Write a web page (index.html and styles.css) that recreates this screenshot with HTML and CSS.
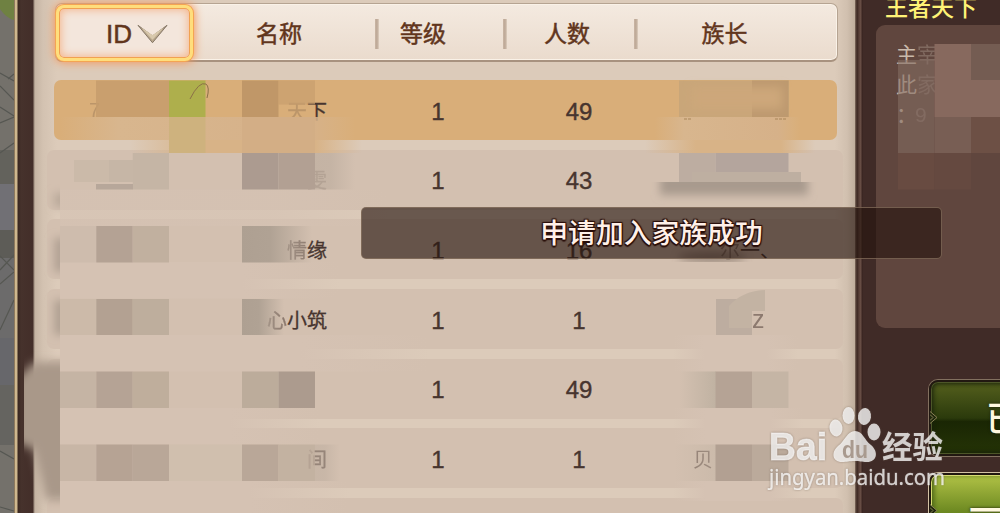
FILE: index.html
```html
<!DOCTYPE html>
<html lang="zh-CN">
  <head>
    <meta charset="UTF-8" />
    <meta name="viewport" content="width=device-width, initial-scale=1.0" />
    <title>家族列表</title>
    <link rel="stylesheet" href="styles.css">
  </head>
  <body>
    <div class="screen">
      <!-- Scene behind the window -->
      <svg class="scene" viewBox="0 0 14 513">
        <rect width="14" height="513" fill="#74716b" />
        <path d="M0 0H14V20Q6 18 0 9Z" fill="#6f8142" />
        <rect y="150" width="14" height="34" fill="#63625c" />
        <rect y="184" width="14" height="46" fill="#717075" />
        <rect y="230" width="14" height="28" fill="#5d5c57" />
        <rect y="258" width="14" height="80" fill="#6c6b6b" />
        <rect y="338" width="14" height="62" fill="#67676b" />
        <rect y="385" width="14" height="60" fill="#656460" />
        <path d="M0 73L14 81M0 86L14 100M0 107L14 116M14 74L8 79M0 123L14 117M0 153L14 143M0 270L14 255M0 256L14 270M0 284L14 272M0 330L14 300M0 451L14 459M0 507L14 511" fill="none" stroke="#565752" stroke-width="1.2" />
      </svg>
      <div class="frame"></div>

      <main class="panel">
        <header class="table-head">
          <div class="head-id">
            <span>ID</span>
            <svg class="sort-arrow" viewBox="0 0 32 20">
              <path d="M1 1L16 19L31 1L16 12Z" fill="#b9a78c" stroke="#837565" stroke-width="1" />
              <path d="M4 3L16 11L28 3L16 16Z" fill="#d8c8ac" />
            </svg>
          </div>
          <div class="head-name">名称</div>
          <div class="sep">等级</div>
          <div class="sep sep-count">人数</div>
          <div class="sep sep-chief">族长</div>
        </header>

        <div class="rows">
          <div class="row selected">
            <span class="id"><i class="faint">7</i></span>
            <span class="name"><i class="faint">天</i>下</span>
            <span class="num">1</span>
            <span class="num">49</span>
            <span class="chief"></span>
          </div>
          <div class="row">
            <span class="id"></span>
            <span class="name"><i class="faint">雯</i></span>
            <span class="num">1</span>
            <span class="num">43</span>
            <span class="chief"></span>
          </div>
          <div class="row">
            <span class="id"></span>
            <span class="name"><i class="half">情</i>缘</span>
            <span class="num">1</span>
            <span class="num">16</span>
            <span class="chief chief-mark"><i class="half">尔</i>一、</span>
          </div>
          <div class="row">
            <span class="id"></span>
            <span class="name"><i class="half">心</i>小筑</span>
            <span class="num">1</span>
            <span class="num">1</span>
            <span class="chief chief-z"><i class="half">z</i></span>
          </div>
          <div class="row">
            <span class="id"></span>
            <span class="name"></span>
            <span class="num">1</span>
            <span class="num">49</span>
            <span class="chief"></span>
          </div>
          <div class="row">
            <span class="id"></span>
            <span class="name"><i class="half">间</i></span>
            <span class="num">1</span>
            <span class="num">1</span>
            <span class="chief chief-last"><i class="half">贝</i></span>
          </div>
          <div class="row"></div>
        </div>
      </main>

      <div class="divider"></div>

      <aside class="side">
        <h2>王者天下</h2>
        <div class="notice">
          <p>主<i>宰</i></p>
          <p>此<i>家</i></p>
          <p class="colon">：<i>9</i></p>
        </div>
        <div class="btn btn-dark">
          <svg class="btn-notch" viewBox="0 0 8 12"><path d="M0 0L7 6L0 12M0 3L3 6L0 9" /></svg>
          <span>已申请</span>
        </div>
        <div class="btn btn-bright">
          <svg class="btn-notch" viewBox="0 0 8 12"><path d="M0 0L7 6L0 12M0 3L3 6L0 9" /></svg>
          <span>一键申请</span>
        </div>
      </aside>

      <!-- Privacy mosaic -->
      <svg class="mosaic" viewBox="0 0 1000 513">
        <defs>
          <filter id="soft" x="-30%" y="-60%" width="160%" height="220%"><feGaussianBlur stdDeviation="5" /></filter>
          <filter id="soft2" x="-80%" y="-60%" width="260%" height="220%"><feGaussianBlur stdDeviation="4" /></filter>
          <linearGradient id="fadeR"><stop offset=".65" stop-color="#d5c2b3" /><stop offset="1" stop-color="#d5c2b3" stop-opacity="0" /></linearGradient>
          <linearGradient id="fadeB"><stop offset="0" stop-color="#d5c2b3" stop-opacity="0" /><stop offset=".25" stop-color="#d5c2b3" /><stop offset=".75" stop-color="#d5c2b3" /><stop offset="1" stop-color="#d5c2b3" stop-opacity="0" /></linearGradient>
          <linearGradient id="tan"><stop offset="0" stop-color="#d8b68e" stop-opacity="0" /><stop offset=".2" stop-color="#d8b68e" /><stop offset=".85" stop-color="#d6b189" /><stop offset="1" stop-color="#d8b58a" stop-opacity="0" /></linearGradient>
          <linearGradient id="tanLow"><stop offset="0" stop-color="#d8b387" stop-opacity="0" /><stop offset=".3" stop-color="#d8b387" /><stop offset=".8" stop-color="#d8b387" /><stop offset="1" stop-color="#d8b387" stop-opacity="0" /></linearGradient>
          <linearGradient id="gray"><stop offset="0" stop-color="#aea092" /><stop offset=".4" stop-color="#b0a294" /><stop offset="1" stop-color="#b0a294" stop-opacity="0" /></linearGradient>
          <linearGradient id="grayL"><stop offset="0" stop-color="#c0b2a2" stop-opacity="0" /><stop offset="1" stop-color="#c0b2a2" /></linearGradient>
          <clipPath id="left"><rect x="24" y="150" width="36" height="363" /></clipPath>
          <clipPath id="smear"><rect x="640" y="182" width="190" height="25" /></clipPath>
          <clipPath id="chief3"><rect x="660" y="235" width="130" height="27" /></clipPath>
        </defs>

        <!-- selected row -->
        <rect x="96" y="80.5" width="73" height="36.5" fill="#c69c6c" opacity=".85" />
        <rect x="169" y="80.5" width="36.5" height="36.5" fill="#aeaf4c" />
        <path d="M190 99Q199 81 206 84Q210 87 207 98" fill="none" stroke="#8c7048" stroke-width="1" />
        <rect x="242" y="80.5" width="36.5" height="36.5" fill="#c09768" />
        <rect x="278.5" y="80.5" width="36.5" height="24" fill="#c89e6d" opacity=".7" />
        <rect x="60" y="117" width="295" height="23" fill="url(#tan)" />
        <rect x="130" y="140" width="232" height="13" fill="url(#tanLow)" />
        <rect x="645" y="140" width="170" height="13" fill="url(#tanLow)" />
        <rect x="169" y="117" width="36.5" height="36" fill="#ceb27e" />
        <rect x="242" y="117" width="73" height="36" fill="#d2ad85" opacity=".7" />
        <rect x="679" y="80.5" width="110" height="36.5" fill="#c9a679" />
        <rect x="752" y="80.5" width="36.5" height="36.5" fill="#bd996f" />
        <rect x="692" y="87" width="90" height="22" fill="#cda77a" filter="url(#soft)" />
        <rect x="655" y="117" width="145" height="23" fill="url(#tan)" />
        <path d="M684 119H692M775 119H787" stroke="#a88558" stroke-dasharray="3 1" />

        <!-- clean area -->
        <rect x="60" y="189.7" width="330" height="36.5" fill="url(#fadeR)" opacity=".65" />
        <rect x="60" y="262" width="280" height="36.5" fill="url(#fadeR)" />
        <rect x="60" y="335" width="370" height="36.5" fill="url(#fadeR)" />
        <rect x="60" y="408" width="260" height="36.5" fill="url(#fadeR)" />
        <rect x="60" y="481" width="290" height="32" fill="url(#fadeR)" />
        <rect x="673" y="335" width="125" height="36.5" fill="url(#fadeB)" />
        <rect x="673" y="408" width="130" height="36.5" fill="url(#fadeB)" />
        <rect x="673" y="481" width="130" height="20" fill="url(#fadeB)" />
        <g clip-path="url(#left)">
          <rect x="54" y="193" width="18" height="14" fill="#b9a99a" filter="url(#soft2)" />
          <rect x="54" y="238" width="18" height="34" fill="#b2a294" filter="url(#soft2)" />
          <rect x="54" y="300" width="18" height="35" fill="#b1a193" filter="url(#soft2)" />
          <path d="M16 380L34 362H76V500H46L34 450L16 442Z" fill="#a99889" filter="url(#soft)" />
        </g>

        <!-- id column -->
        <rect x="74" y="160" width="58" height="22" fill="#cbbaa9" />
        <rect x="109" y="160" width="60" height="22" fill="#c6b6a6" />
        <rect x="132.7" y="153" width="36.3" height="36.5" fill="#c5b5a5" />
        <rect x="96" y="184" width="37" height="5.5" fill="#b7a79a" />
        <rect x="60" y="226" width="36.3" height="36.5" fill="#cebcad" />
        <rect x="96.3" y="226" width="36.4" height="36.5" fill="#b4a294" />
        <rect x="132.7" y="226" width="36.3" height="36.5" fill="#c1b09f" />
        <rect x="60" y="299" width="36.3" height="36" fill="#ccbaa9" />
        <rect x="96.3" y="299" width="36.4" height="36" fill="#b3a192" />
        <rect x="132.7" y="299" width="36.3" height="36" fill="#beae9d" />
        <rect x="60" y="371.5" width="36.3" height="36.5" fill="#c5b4a4" />
        <rect x="96.3" y="371.5" width="36.4" height="36.5" fill="#b5a395" />
        <rect x="132.7" y="371.5" width="36.3" height="36.5" fill="#bfae9c" />
        <rect x="60" y="444.5" width="36.3" height="36.5" fill="#c8b6a6" />
        <rect x="96.3" y="444.5" width="36.4" height="36.5" fill="#b6a394" />
        <rect x="132.7" y="444.5" width="36.3" height="36.5" fill="#b9a798" />
        <rect x="169" y="444.5" width="73" height="36.5" fill="#d0bfae" />

        <!-- name column -->
        <rect x="242" y="153" width="36.5" height="36.5" fill="#ac9b90" />
        <rect x="278.5" y="153" width="36.5" height="36.5" fill="#b2a093" />
        <rect x="315" y="153" width="40" height="36.5" fill="url(#gray)" opacity=".4" />
        <rect x="242" y="226" width="70" height="36.5" fill="url(#gray)" />
        <rect x="242" y="299" width="42" height="36" fill="url(#gray)" />
        <rect x="242" y="371.5" width="36.5" height="36.5" fill="#bcac9b" />
        <rect x="278.5" y="371.5" width="36.5" height="36.5" fill="#ac9b8e" />
        <rect x="242" y="444.5" width="36.5" height="36.5" fill="#b9a798" />
        <rect x="278.5" y="444.5" width="36.5" height="36.5" fill="#bfae9d" opacity=".8" />
        <rect x="315" y="444.5" width="25" height="36.5" fill="url(#gray)" opacity=".3" />

        <!-- chief column -->
        <rect x="679" y="153" width="36.5" height="29" fill="#bdada1" />
        <rect x="715.5" y="153" width="73" height="21" fill="#b4a59d" />
        <rect x="692" y="172" width="109" height="12" fill="#beafa1" />
        <g clip-path="url(#smear)">
          <rect x="660" y="174" width="148" height="21" fill="#a89a8d" filter="url(#soft2)" />
        </g>
        <g clip-path="url(#chief3)">
          <ellipse cx="712" cy="257" rx="34" ry="5" fill="#6a5b51" opacity=".6" filter="url(#soft2)" />
        </g>
        <rect x="716" y="299" width="36" height="36" fill="#bdada0" />
        <path d="M729 306Q742 291 765 290V311H752V328H729Z" fill="#c3b3a3" />
        <rect x="680" y="371.5" width="36" height="36.5" fill="url(#grayL)" />
        <rect x="715.5" y="371.5" width="36.5" height="36.5" fill="#b5a395" />
        <rect x="752" y="371.5" width="36.5" height="36.5" fill="#c5b5a5" />
        <rect x="675" y="444.5" width="41" height="36.5" fill="url(#grayL)" opacity=".4" />
        <rect x="715.5" y="444.5" width="36.5" height="36.5" fill="#b2a092" />
        <rect x="752" y="444.5" width="36.5" height="36.5" fill="#bbaa9b" />

        <!-- sidebar -->
        <rect x="898" y="60" width="36.5" height="93" fill="#846c62" opacity=".6" />
        <rect x="934.5" y="44" width="36.5" height="36" fill="#87695e" />
        <rect x="971" y="44" width="29" height="36" fill="#745c52" />
        <rect x="934.5" y="80" width="65.5" height="37" fill="#87695e" />
        <rect x="934.5" y="117" width="36.5" height="36" fill="#785e54" />
        <rect x="971" y="117" width="29" height="36" fill="#6d5045" />
        <rect x="898" y="153" width="36.5" height="36.5" fill="#684b41" />
        <rect x="934.5" y="153" width="36.5" height="36.5" fill="#654940" />
      </svg>

      <div class="toast">申请加入家族成功</div>

      <svg class="watermark" viewBox="0 0 190 90">
        <text class="wm-logo" x="8" y="60" textLength="58" lengthAdjust="spacingAndGlyphs">Bai</text>
        <g class="wm-paw">
          <ellipse cx="75" cy="28" rx="6.5" ry="8.5" transform="rotate(-8 75 28)" />
          <ellipse cx="87.5" cy="15.5" rx="6" ry="8.5" />
          <ellipse cx="103.5" cy="16.5" rx="6.5" ry="8.5" transform="rotate(8 103.5 16.5)" />
          <ellipse cx="113" cy="32" rx="6.5" ry="8.5" />
          <path d="M94 31C102 31 103 40 110 45C118 52 116 62 106 62C100 62 99 61 94 61C88 61 86 62 81 62C71 62 70 52 77 46C84 41 86 31 94 31Z" />
        </g>
        <text class="wm-du" x="81" y="58" textLength="26" lengthAdjust="spacingAndGlyphs">du</text>
        <text class="wm-cn" x="121" y="58">经验</text>
        <text class="wm-url" x="8" y="85" textLength="176" lengthAdjust="spacingAndGlyphs">jingyan.baidu.com</text>
      </svg>
    </div>
  </body>
</html>
```

FILE: styles.css
```css
* {
  box-sizing: border-box;
}

body {
  margin: 0;
  font-family: 'Liberation Sans', 'Noto Sans CJK SC', sans-serif;
  background: #402b27;
  overflow: hidden;
}

i {
  font-style: normal;
}

.screen {
  position: relative;
  display: flex;
  width: 1000px;
  height: 513px;
  overflow: hidden;
}

.scene {
  width: 14px;
  height: 513px;
}

.frame {
  width: 21px;
  background: linear-gradient(90deg, #4b3a2c 0, #d0b98f 1px, #cdb68d 3px, #392720 4px, #46322c 7px, #432e29 19px, #a29182 20px, #b8a898 21px);
}

/* Main list */
.panel {
  width: 820px;
  padding: 3px 12px 0;
  background: linear-gradient(90deg, #c5b4a3 0, #d3c2b1 8px, #dccbba 22px, #dccbba 800px, #d1c0af 812px, #bfae9c 820px);
}

.table-head {
  display: grid;
  grid-template-columns: 137px 182px 128px 131px 203px;
  width: 783px;
  height: 59px;
  margin-left: 8px;
  border: 1px solid #b6a492;
  border-bottom: 2px solid #a8927f;
  border-radius: 7px;
  background: linear-gradient(#f4eae0, #eadbcd);
  box-shadow: inset 0 0 0 1px #faf2e8;
  color: #61351c;
  font-size: 23px;
  -webkit-text-stroke: 0.5px #61351c;
}

.table-head > div {
  display: flex;
  align-items: center;
  justify-content: center;
  padding-bottom: 1px;
}

.table-head .head-id {
  gap: 5px;
  height: 56px;
  margin-top: 1px;
  padding: 2px 0 0 25px;
  border: 3px solid #ffde7c;
  border-radius: 8px;
  background: #f3e6dc;
  box-shadow: 0 0 0 1px #f4a452, 0 0 8px 2px #f39b62, inset 0 0 0 1px #f1a151, inset 0 0 9px 2px #f5b68d;
  font-size: 26px;
}

.table-head > .head-name {
  padding-right: 10px;
}

.sort-arrow {
  width: 31px;
  height: 20px;
}

.table-head > .sep {
  padding-right: 32px;
  background: linear-gradient(90deg, #cab6a5, #bca795, #decfc0) 0 15px / 4px 30px no-repeat;
}

.table-head > .sep-count {
  padding-right: 3px;
}

.table-head > .sep-chief {
  padding-right: 22px;
}

.rows {
  display: grid;
  grid-auto-rows: 60px;
  row-gap: 9.7px;
  margin-top: 18px;
}

.row {
  display: grid;
  grid-template-columns: 120px 160px 220px 64px 232px;
  align-items: center;
  width: 796px;
  border-radius: 7px;
  background: #d3c0b0;
  color: #47352f;
  font-size: 20px;
}

.row.selected {
  width: 783px;
  margin-left: 7px;
  grid-template-columns: 113px 160px 220px 64px 226px;
  background: #d9ae79;
}

.id {
  padding-left: 35px;
}

.name {
  text-align: right;
  -webkit-text-stroke: 0.3px;
}

.num {
  padding-left: 10px;
  padding-top: 3px;
  font-size: 24px;
  text-align: center;
  -webkit-text-stroke: 0.4px;
}

.row .num:nth-child(3) {
  padding-left: 2px;
}

.row .num:nth-child(4) {
  padding-left: 0;
}

.faint {
  opacity: 0.2;
}

.half {
  opacity: 0.5;
}

.chief-mark {
  padding-left: 109px;
}

.chief-z {
  padding-left: 141px;
  font-size: 25px;
}

.chief-last {
  padding-left: 82px;
}

.divider {
  width: 8px;
  background: linear-gradient(90deg, #826e60, #3b2721 2px, #573f37 4px, #6c5148 6px, #36221e 7px, #402b27);
}

/* Right column */
.side {
  display: flex;
  flex-direction: column;
  flex: 1;
  min-width: 0;
  background: #402b27;
}

.side h2 {
  flex: none;
  height: 25px;
  margin: 0 0 0 22px;
  color: #fff376;
  font-size: 23px;
  font-weight: 500;
  line-height: 16px;
  white-space: nowrap;
}

.notice {
  flex: none;
  width: 140px;
  height: 303px;
  margin-left: 13px;
  padding: 16px 0 0 20px;
  border-radius: 9px;
  background: #60463e;
  color: #c9b9ab;
  font-size: 21px;
}

.notice p {
  height: 30px;
  margin: 0;
  line-height: 28px;
  white-space: nowrap;
}

.notice i {
  opacity: 0.3;
}

.notice .colon {
  letter-spacing: -2px;
}

.btn {
  position: relative;
  display: flex;
  flex: none;
  align-items: center;
  width: 160px;
  height: 76px;
  margin: 52px 0 0 66px;
  padding: 0 0 4px 55px;
  border: 2px solid #211811;
  border-radius: 9px;
  color: #fff8df;
  font-size: 34px;
  font-weight: 500;
  white-space: nowrap;
}

.btn-dark {
  background: linear-gradient(#55601d, #2b3a0c 50%, #1a2604 55%, #253406);
  box-shadow: 0 0 0 1px #82705f, inset 0 0 0 1px #4c5628, inset 0 0 5px 2px #17200a;
}

.btn-bright {
  margin-top: 17px;
  padding: 0 0 5px 38px;
  background: linear-gradient(#b1c246, #6e8a22 50%, #4d6a0e);
  box-shadow: 0 0 0 1px #d4c3a5, inset 0 0 0 1px #d7dc72, inset 3px 0 5px #496315;
}

.btn span {
  text-shadow: 0 0 3px #1a1d08;
}

.btn-notch {
  position: absolute;
  left: -1px;
  top: 29px;
  width: 8px;
  height: 13px;
  fill: #20280d;
  stroke: #8b8256;
}

/* Layers over the window */
.mosaic {
  position: absolute;
  left: 0;
  top: 0;
  width: 1000px;
  height: 513px;
}

.toast {
  position: absolute;
  left: 361px;
  top: 207px;
  width: 581px;
  height: 52px;
  border: 1px solid rgba(140, 118, 98, 0.7);
  border-radius: 5px;
  background: rgba(38, 20, 14, 0.63);
  color: #fff0e8;
  font-size: 27.8px;
  font-weight: 500;
  line-height: 52px;
  text-align: center;
  text-shadow: 1px 1px 1px #2a0f0a, -1px -1px 1px #2a0f0a, 1px -1px 1px #2a0f0a, -1px 1px 1px #2a0f0a, 0 2px 1px #2a0f0a;
}

.watermark {
  position: absolute;
  left: 761px;
  top: 400px;
  width: 190px;
  height: 90px;
  fill: rgba(255, 255, 255, 0.76);
  filter: drop-shadow(0 0 1px rgba(90, 75, 65, 0.6));
}

.wm-logo {
  font-size: 38px;
  font-weight: bold;
  stroke: rgba(255, 255, 255, 0.5);
  stroke-width: 1px;
}

.wm-du {
  fill: #a99a8f;
  font-size: 24px;
  font-weight: bold;
}

.wm-cn {
  font-size: 30.5px;
  font-weight: bold;
}

.wm-url {
  font-family: 'Noto Sans', sans-serif;
  font-size: 21px;
  stroke: rgba(255, 255, 255, 0.4);
  stroke-width: 0.5px;
}
```
